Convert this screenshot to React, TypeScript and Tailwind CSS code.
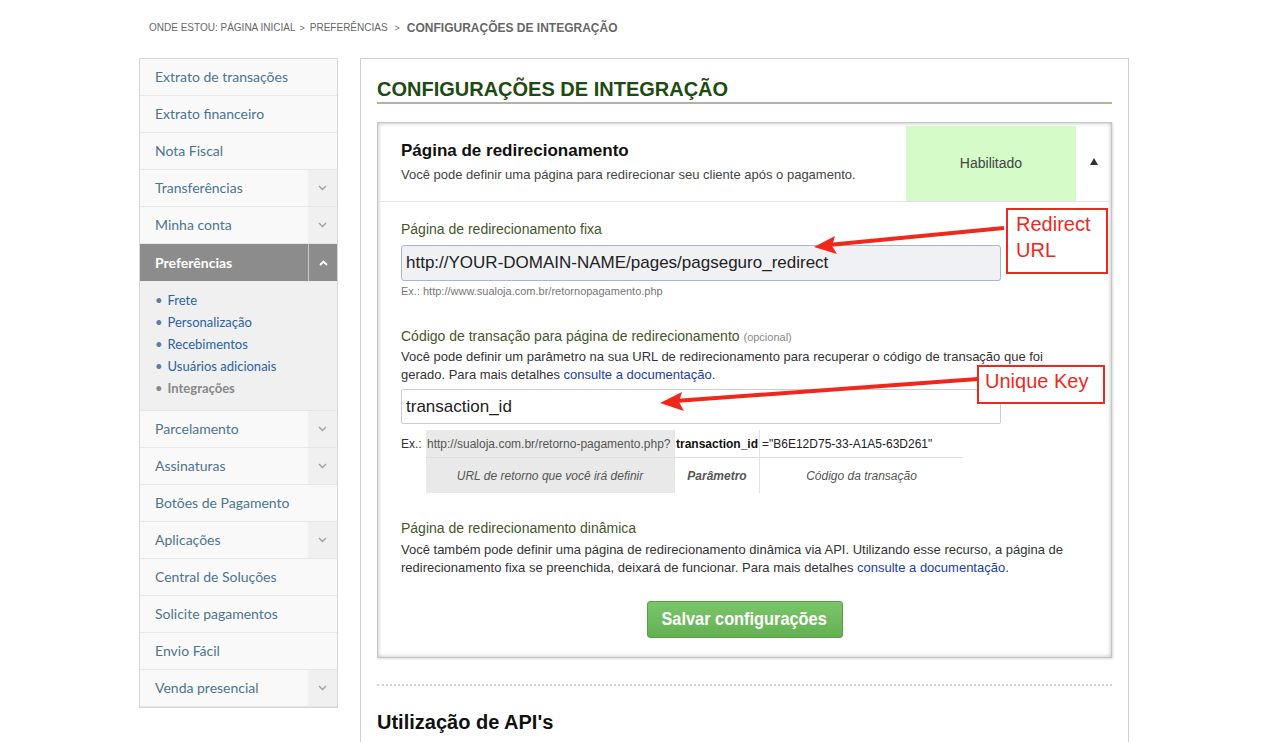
import React from "react";

const Chevron = ({ up = false, color = "#a0a0a0" }: { up?: boolean; color?: string }) => (
  <svg width="9" height="6" viewBox="0 0 9 6" fill="none">
    {up ? (
      <path d="M1 5 L4.5 1.5 L8 5" stroke={color} strokeWidth="1.8" />
    ) : (
      <path d="M1 1 L4.5 4.5 L8 1" stroke={color} strokeWidth="1.4" />
    )}
  </svg>
);

type Item = { label: string; arrow?: boolean };

const Row = ({ label, arrow }: Item) => (
  <div className="flex h-[37px] border-b border-[#e6e6e6] bg-[#f9f9f9]">
    <div className="flex flex-1 items-center pb-[1px] pl-[15px] text-[14px] text-[#4b7590]">{label}</div>
    {arrow ? (
      <div className="flex w-[29px] items-center justify-center bg-[#f0f0f0]">
        <Chevron />
      </div>
    ) : null}
  </div>
);

const top: Item[] = [
  { label: "Extrato de transações" },
  { label: "Extrato financeiro" },
  { label: "Nota Fiscal" },
  { label: "Transferências", arrow: true },
  { label: "Minha conta", arrow: true },
];
const bottom: Item[] = [
  { label: "Parcelamento", arrow: true },
  { label: "Assinaturas", arrow: true },
  { label: "Botões de Pagamento" },
  { label: "Aplicações", arrow: true },
  { label: "Central de Soluções" },
  { label: "Solicite pagamentos" },
  { label: "Envio Fácil" },
  { label: "Venda presencial", arrow: true },
];

export default function App() {
  return (
    <div className="relative h-[742px] w-[1279px] overflow-hidden bg-white font-['Liberation_Sans',Arial,sans-serif] text-[#333]">
      {/* breadcrumb */}
      <div className="flex h-[58px] items-start pl-[149px] pt-[20px] text-[#666]">
        <span className="text-[10px] leading-[16px]">ONDE ESTOU: PÁGINA INICIAL</span>
        <span className="ml-[4px] text-[9px] leading-[16px]">&gt;</span>
        <span className="ml-[5px] text-[10px] leading-[16px]">PREFERÊNCIAS</span>
        <span className="ml-[7px] text-[9px] leading-[16px]">&gt;</span>
        <span className="ml-[7px] text-[12px] font-bold leading-[16px]">CONFIGURAÇÕES DE INTEGRAÇÃO</span>
      </div>

      <div className="flex gap-[22px] pl-[139px]">
        {/* sidebar */}
        <div className="w-[199px] self-start border border-b-0 border-[#d6d6d6] font-['Lato',sans-serif]">
          {top.map((i) => (
            <Row key={i.label} {...i} />
          ))}
          <div className="flex h-[37px] bg-[#8c8c8c]">
            <div className="flex flex-1 items-center pb-[1px] pl-[15px] text-[14px] font-bold text-white">Preferências</div>
            <div className="flex w-[29px] items-center justify-center border-l border-[#c8c8c8]">
              <Chevron up color="#ffffff" />
            </div>
          </div>
          <div className="flex h-[130px] flex-col border-b border-[#e6e6e6] bg-[#f0f0f0] pl-[15px] pt-[8px] text-[13px] leading-[22px]">
            {["Frete", "Personalização", "Recebimentos", "Usuários adicionais"].map((s) => (
              <div key={s} className="text-[#2a62a4]">
                <span className="mr-[5px] text-[#5a7fa8]">•</span>
                {s}
              </div>
            ))}
            <div className="font-bold text-[#888]">
              <span className="mr-[5px] font-normal">•</span>Integrações
            </div>
          </div>
          {bottom.map((i) => (
            <Row key={i.label} {...i} />
          ))}
          <div className="border-b border-[#d6d6d6]" />
        </div>

        {/* main */}
        <div className="h-[700px] w-[769px] border border-[#cfcfcf] px-[16px] pt-[18px]">
          <div className="border-b-2 border-[#a9b89f] pb-[1px] text-[20px] font-bold leading-[24px] text-[#1d4a12]">
            CONFIGURAÇÕES DE INTEGRAÇÃO
          </div>

          {/* card */}
          <div className="mt-[18px] border border-[#c6c6c6] shadow-[inset_0_0_4px_rgba(0,0,0,0.28),1px_1px_2px_rgba(0,0,0,0.15)]">
            <div className="flex h-[79px] border-b border-[#e4e4e4]">
              <div className="flex-1 pl-[23px] pt-[18px]">
                <div className="text-[17px] font-bold leading-[20px] text-[#111]">Página de redirecionamento</div>
                <div className="mt-[6px] text-[13px] leading-[16px] text-[#444]">
                  Você pode definir uma página para redirecionar seu cliente após o pagamento.
                </div>
              </div>
              <div className="mt-[3px] flex w-[170px] items-center justify-center bg-[#d5fbc8] text-[14px] text-[#444]">
                Habilitado
              </div>
              <div className="flex w-[35px] items-center justify-center pb-[2px]">
                <div className="h-0 w-0 border-x-[4px] border-b-[7px] border-x-transparent border-b-[#333]" />
              </div>
            </div>

            <div className="pb-[19px] pl-[23px] pt-[19px]">
              <div className="text-[14px] leading-[17px] text-[#42582a]">Página de redirecionamento fixa</div>
              <div className="mt-[7px] flex h-[36px] w-[600px] items-center rounded-[3px] border border-[#a9b7c6] bg-[#eff1f5] pl-[4px] text-[17px] text-[#222]">
                http://YOUR-DOMAIN-NAME/pages/pagseguro_redirect
              </div>
              <div className="mt-[3px] text-[11px] leading-[14px] text-[#777]">
                Ex.: http://www.sualoja.com.br/retornopagamento.php
              </div>

              <div className="mt-[30px] text-[14px] leading-[17px] text-[#42582a]">
                Código de transação para página de redirecionamento{" "}
                <span className="text-[11px] text-[#888]">(opcional)</span>
              </div>
              <div className="mt-[2px] whitespace-nowrap text-[13px] leading-[18px] text-[#333]">
                Você pode definir um parâmetro na sua URL de redirecionamento para recuperar o código de transação que foi
                <br />
                gerado. Para mais detalhes <span className="text-[#1a3dab]">consulte a documentação</span>.
              </div>
              <div className="mt-[5px] flex h-[35px] w-[600px] items-center rounded-[2px] border border-[#cccccc] bg-white pl-[4px] text-[17px] text-[#222]">
                transaction_id
              </div>

              {/* example table */}
              <div className="mt-[6px] flex text-[12px]">
                <div className="flex h-[28px] w-[25px] items-center text-[#333]">Ex.:</div>
                <div className="flex flex-col">
                  <div className="flex h-[28px] border-b border-[#dddddd]">
                    <div className="flex w-[248px] items-center whitespace-nowrap bg-[#e9e9e9] pl-[1px] text-[12px] text-[#555]">
                      http://sualoja.com.br/retorno-pagamento.php?
                    </div>
                    <div className="flex w-[86px] items-center justify-center border-x border-[#e2e2e2] font-bold text-[#111]">
                      transaction_id
                    </div>
                    <div className="flex w-[203px] items-center pl-[2px] text-[#222]">="B6E12D75-33-A1A5-63D261"</div>
                  </div>
                  <div className="flex h-[35px]">
                    <div className="flex w-[248px] items-center justify-center bg-[#e9e9e9] italic text-[#555]">
                      URL de retorno que você irá definir
                    </div>
                    <div className="flex w-[86px] items-center justify-center border-x border-[#e2e2e2] font-bold italic text-[#555]">
                      Parâmetro
                    </div>
                    <div className="flex w-[203px] items-center justify-center italic text-[#555]">Código da transação</div>
                  </div>
                </div>
              </div>

              <div className="mt-[27px] text-[14px] leading-[17px] text-[#42582a]">Página de redirecionamento dinâmica</div>
              <div className="mt-[4px] whitespace-nowrap text-[13px] leading-[18px] text-[#333]">
                Você também pode definir uma página de redirecionamento dinâmica via API. Utilizando esse recurso, a página de
                <br />
                redirecionamento fixa se preenchida, deixará de funcionar. Para mais detalhes{" "}
                <span className="text-[#1a3dab]">consulte a documentação</span>.
              </div>

              <div className="-ml-[23px] mt-[24px] flex justify-center">
                <div className="flex h-[37px] w-[196px] items-center justify-center rounded-[3px] border border-[#5a9e4a] bg-gradient-to-b from-[#7cc66a] to-[#63b053] text-white">
                  <span className="inline-block scale-x-[0.86] whitespace-nowrap text-[19px] font-bold">Salvar configurações</span>
                </div>
              </div>
            </div>
          </div>

          <div className="mt-[26px] border-t-2 border-dotted border-[#d4d4d4]" />
          <div className="mt-[24px] text-[20px] font-bold leading-[24px] text-[#111]">Utilização de API's</div>
        </div>
      </div>

      {/* annotations */}
      <div className="absolute left-[1006px] top-[208px] h-[66px] w-[102px] border-2 border-[#f0281c] bg-white pl-[8px] pt-[1px] text-[20px] leading-[26px] text-[#f0281c]">
        Redirect
        <br />
        URL
      </div>
      <div className="absolute left-[977px] top-[365px] h-[39px] w-[128px] border-2 border-[#f0281c] bg-white pl-[6px] pt-[1px] text-[20px] leading-[26px] text-[#f0281c]">
        Unique Key
      </div>
      <svg className="pointer-events-none absolute left-0 top-0" width="1279" height="742">
        <line x1="1004" y1="228" x2="828" y2="245" stroke="#f0281c" strokeWidth="4" />
        <polygon points="814,247 835,236 832,246 837,254" fill="#f0281c" />
        <line x1="978" y1="379" x2="675" y2="401" stroke="#f0281c" strokeWidth="4" />
        <polygon points="660,403 682,392 679,402 684,411" fill="#f0281c" />
      </svg>
    </div>
  );
}
